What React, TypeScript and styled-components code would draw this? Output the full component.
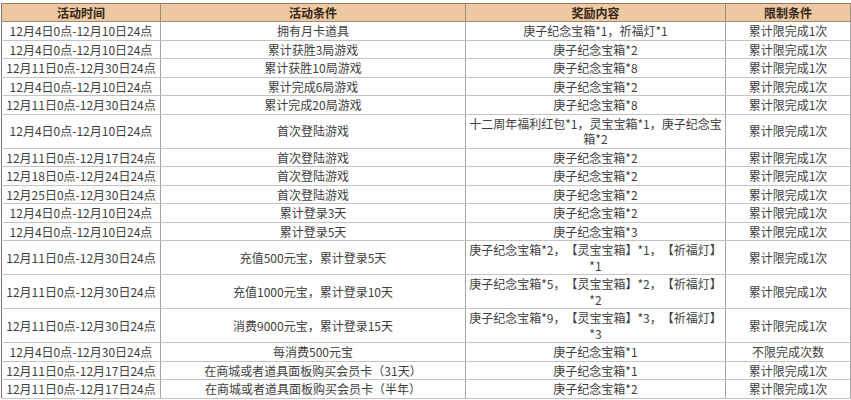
import React from 'react';
import styled, { createGlobalStyle } from 'styled-components';

const GlobalStyle = createGlobalStyle`
  html, body {
    margin: 0;
    padding: 0;
    background: #ffffff;
  }
  body {
    font-family: "Noto Sans CJK SC", "Microsoft YaHei", sans-serif;
  }
`;

type Row = [string, string, string, string];

const ONCE = '累计限完成1次';

const rows: Row[] = [
  ['12月4日0点-12月10日24点', '拥有月卡道具', '庚子纪念宝箱*1，祈福灯*1', ONCE],
  ['12月4日0点-12月10日24点', '累计获胜3局游戏', '庚子纪念宝箱*2', ONCE],
  ['12月11日0点-12月30日24点', '累计获胜10局游戏', '庚子纪念宝箱*8', ONCE],
  ['12月4日0点-12月10日24点', '累计完成6局游戏', '庚子纪念宝箱*2', ONCE],
  ['12月11日0点-12月30日24点', '累计完成20局游戏', '庚子纪念宝箱*8', ONCE],
  ['12月4日0点-12月10日24点', '首次登陆游戏', '十二周年福利红包*1，灵宝宝箱*1，庚子纪念宝箱*2', ONCE],
  ['12月11日0点-12月17日24点', '首次登陆游戏', '庚子纪念宝箱*2', ONCE],
  ['12月18日0点-12月24日24点', '首次登陆游戏', '庚子纪念宝箱*2', ONCE],
  ['12月25日0点-12月30日24点', '首次登陆游戏', '庚子纪念宝箱*2', ONCE],
  ['12月4日0点-12月10日24点', '累计登录3天', '庚子纪念宝箱*2', ONCE],
  ['12月4日0点-12月10日24点', '累计登录5天', '庚子纪念宝箱*3', ONCE],
  ['12月11日0点-12月30日24点', '充值500元宝，累计登录5天', '庚子纪念宝箱*2，【灵宝宝箱】*1，【祈福灯】*1', ONCE],
  ['12月11日0点-12月30日24点', '充值1000元宝，累计登录10天', '庚子纪念宝箱*5，【灵宝宝箱】*2，【祈福灯】*2', ONCE],
  ['12月11日0点-12月30日24点', '消费9000元宝，累计登录15天', '庚子纪念宝箱*9，【灵宝宝箱】*3，【祈福灯】*3', ONCE],
  ['12月4日0点-12月30日24点', '每消费500元宝', '庚子纪念宝箱*1', '不限完成次数'],
  ['12月11日0点-12月17日24点', '在商城或者道具面板购买会员卡（31天）', '庚子纪念宝箱*1', ONCE],
  ['12月11日0点-12月17日24点', '在商城或者道具面板购买会员卡（半年）', '庚子纪念宝箱*2', ONCE],
];

const headers = ['活动时间', '活动条件', '奖励内容', '限制条件'];
const widths = [159, 305, 260, 125];

const App = () => {
  return (
    <>
      <GlobalStyle />
      <Table>
        <colgroup>
          {widths.map((w, i) => (
            <col key={i} style={{ width: w }} />
          ))}
        </colgroup>
        <thead>
          <tr>
            {headers.map((h) => (
              <HeadCell key={h}>{h}</HeadCell>
            ))}
          </tr>
        </thead>
        <tbody>
          {rows.map((row, r) => (
            <tr key={r}>
              {row.map((text, c) => (
                <Cell key={c} $nowrap={c === 0}>
                  {text}
                </Cell>
              ))}
            </tr>
          ))}
        </tbody>
      </Table>
    </>
  );
};

export default App;

const Table = styled.table`
  margin: 3px 0 0 1px;
  width: 849px;
  table-layout: fixed;
  border-collapse: collapse;
  border-left: 1px solid #777777;
  border-top: 1px solid #8c7b6a;
  font-size: 12px;
  line-height: 15.5px;
  text-spacing-trim: space-all;
`;

const HeadCell = styled.th`
  height: 17px;
  padding: 0 3px;
  background-color: #edc8a0;
  color: #33261a;
  font-weight: 700;
  text-align: center;
  border-right: 1px solid #9c8a78;
  border-bottom: 1px solid #a08a74;
`;

const Cell = styled.td<{ $nowrap?: boolean }>`
  padding: 1px 3px;
  color: #3e3e3e;
  text-align: center;
  white-space: ${(props) => (props.$nowrap ? 'nowrap' : 'normal')};
  overflow: hidden;
  border-right: 1px solid #a4a4a4;
  border-bottom: 1px solid #c4c4c4;
`;
